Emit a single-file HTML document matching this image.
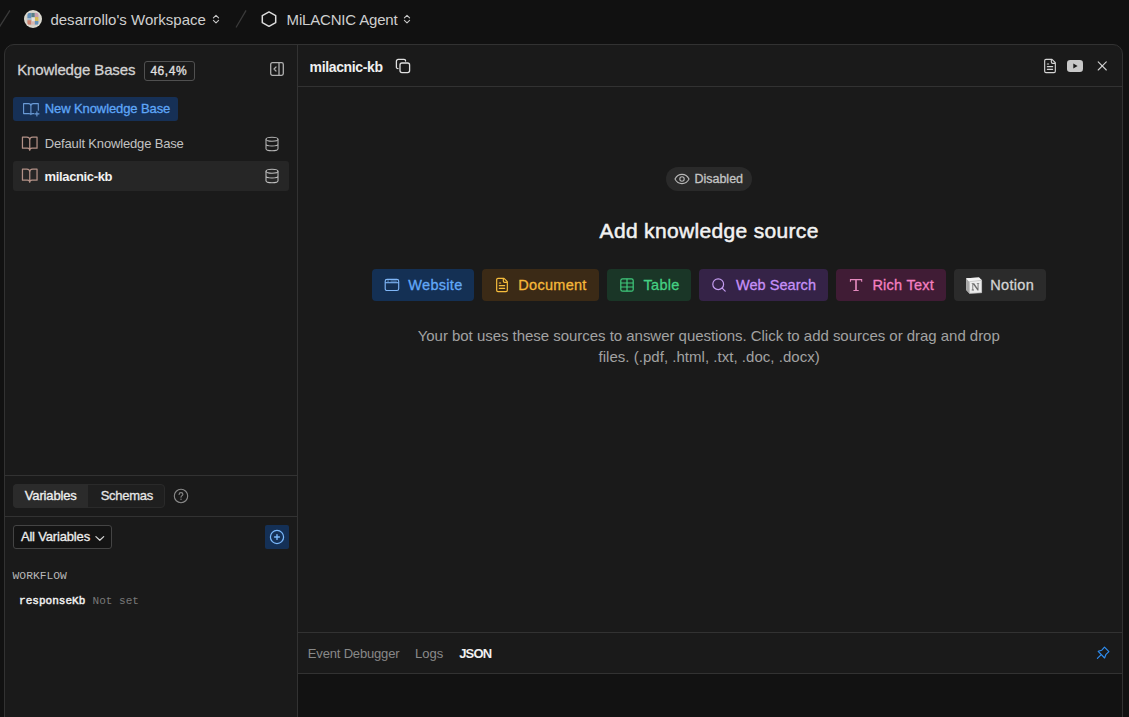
<!DOCTYPE html>
<html>
<head>
<meta charset="utf-8">
<style>
*{box-sizing:border-box;margin:0;padding:0}
html,body{width:1129px;height:717px;overflow:hidden;background:#111111;font-family:"Liberation Sans",sans-serif;color:#e6e6e6}
.abs{position:absolute}
.t{position:absolute;white-space:nowrap;line-height:1}
svg{position:absolute;overflow:visible}
#frame{position:absolute;left:4px;top:44px;width:1119px;height:700px;border:1px solid #323232;border-radius:10px;background:#1a1a1a;overflow:hidden}
.hl{position:absolute;height:1px;background:#323232}
.vl{position:absolute;width:1px;background:#323232}
.m{-webkit-text-stroke:0.3px currentColor}
.m2{-webkit-text-stroke:0.5px currentColor}
.btn{position:absolute;top:269px;height:32px;border-radius:4px}
</style>
</head>
<body>
<!-- top bar -->
<div id="topbar">
  <svg style="left:0px;top:0px" width="20" height="40" viewBox="0 0 20 40"><path d="M9.6 10.8 L-0.6 27" stroke="#3a3a3a" stroke-width="1.3" fill="none" stroke-linecap="round"/></svg>
  <svg id="avatar" style="left:24px;top:10px" width="18" height="18" viewBox="0 0 18 18"><defs><clipPath id="avc"><circle cx="9" cy="9" r="7.4"/></clipPath></defs><circle cx="9" cy="9" r="9" fill="#dcdad0"/><g clip-path="url(#avc)" opacity="0.85"><rect x="0" y="0" width="18" height="18" fill="#cfcdc6"/><rect x="3.4" y="3" width="4" height="5" fill="#4d82b4"/><rect x="7.4" y="3" width="3.4" height="4.4" fill="#3f6f78"/><rect x="10.8" y="3" width="3.6" height="4" fill="#c592aa"/><rect x="10.8" y="7" width="3.6" height="4" fill="#d6b643"/><rect x="7.4" y="7.4" width="3.4" height="4" fill="#e6e6e6"/><rect x="3.4" y="8" width="4" height="2.2" fill="#9fb4c8"/><rect x="3.4" y="10.2" width="4" height="4.4" fill="#c7705c"/><rect x="7.4" y="11.4" width="3.4" height="3.2" fill="#d9b0a8"/><rect x="10.8" y="11" width="3.6" height="3.6" fill="#4f86b8"/></g></svg>
  <div class="t" style="left:50.4px;top:12px;font-size:15px;color:#cfcfcf;letter-spacing:0.02px">desarrollo's Workspace</div>
  <svg style="left:211px;top:13px" width="10" height="12" viewBox="0 0 10 12"><path d="M2.4 4.9 L5 2.3 L7.6 4.9 M2.4 7.3 L5 9.9 L7.6 7.3" stroke="#c8c8c8" stroke-width="1.1" fill="none" stroke-linecap="round" stroke-linejoin="round"/></svg>
  <svg style="left:230px;top:0px" width="20" height="40" viewBox="0 0 20 40"><path d="M15.8 10.8 L6.3 27" stroke="#3a3a3a" stroke-width="1.3" fill="none" stroke-linecap="round"/></svg>
  <svg style="left:261px;top:11px" width="16" height="17" viewBox="0 0 16 17"><path d="M8 0.9 L14.7 4.6 L14.7 11.6 L8 15.3 L1.3 11.6 L1.3 4.6 Z" stroke="#dcdcdc" stroke-width="1.5" fill="none" stroke-linejoin="round"/></svg>
  <div class="t" style="left:286.6px;top:12px;font-size:15px;color:#cfcfcf;letter-spacing:-0.18px">MiLACNIC Agent</div>
  <svg style="left:402px;top:13px" width="10" height="12" viewBox="0 0 10 12"><path d="M2.4 4.9 L5 2.3 L7.6 4.9 M2.4 7.3 L5 9.9 L7.6 7.3" stroke="#c8c8c8" stroke-width="1.1" fill="none" stroke-linecap="round" stroke-linejoin="round"/></svg>
</div>

<div id="frame"></div>

<!-- structural lines -->
<div class="vl" style="left:297px;top:45px;height:672px"></div>
<div class="hl" style="left:298px;top:86px;width:824px"></div>
<div class="hl" style="left:5px;top:475px;width:292px"></div>
<div class="hl" style="left:5px;top:516px;width:292px"></div>
<div class="hl" style="left:298px;top:632px;width:824px"></div>
<div class="hl" style="left:298px;top:673px;width:824px"></div>
<div class="abs" style="left:298px;top:674px;width:824px;height:43px;background:#121212"></div>

<!-- sidebar header -->
<div class="t m" style="left:17.2px;top:61.7px;font-size:15px;color:#d2d2d2;letter-spacing:-0.13px">Knowledge Bases</div>
<div class="abs" style="left:144px;top:61px;width:51px;height:20px;border:1px solid #505050;border-radius:3px"></div>
<div class="t m" style="left:150.4px;top:65px;font-size:12px;color:#e0e0e0;letter-spacing:0.55px">46,4%</div>
<svg style="left:270px;top:62px" width="14" height="14" viewBox="0 0 14 14"><rect x="0.7" y="0.7" width="12.6" height="12.6" rx="1.7" stroke="#b0b0b0" stroke-width="1.3" fill="none"/><path d="M9 0.7 V13.3" stroke="#b0b0b0" stroke-width="1.3"/><path d="M6 5 L4 7 L6 9" stroke="#b0b0b0" stroke-width="1.2" fill="none" stroke-linecap="round" stroke-linejoin="round"/></svg>

<!-- new kb button -->
<div class="abs" style="left:13px;top:97px;width:165px;height:24px;border-radius:3px;background:#163056"></div>
<svg style="left:22px;top:101px" width="18" height="16" viewBox="0 0 18 16"><path d="M1.6 2.6 H6.6 Q8.9 2.6 8.9 5 V13.6 Q8.9 12.6 7 12.6 H1.6 Z M8.9 5 Q8.9 2.6 11.2 2.6 H16.3 V9.2 M8.9 13.6 Q8.9 12.6 10.8 12.6 H11.6" stroke="#6a9ad6" stroke-width="1.1" fill="none" stroke-linejoin="round" stroke-linecap="round"/><path d="M14.9 10.7 V15 M12.8 12.85 H17" stroke="#6a9ad6" stroke-width="1.1" stroke-linecap="round"/></svg>
<div class="t m" style="left:44.8px;top:102px;font-size:13px;color:#5ea6f7;letter-spacing:-0.1px">New Knowledge Base</div>

<!-- kb rows -->
<svg style="left:21px;top:135px" width="17.5" height="17.5" viewBox="0 0 24 24"><path d="M2 3h6a4 4 0 0 1 4 4v14a3 3 0 0 0-3-3H2z M22 3h-6a4 4 0 0 0-4 4v14a3 3 0 0 1 3-3h7z" stroke="#b39187" stroke-width="1.7" fill="none" stroke-linejoin="round" stroke-linecap="round"/></svg>
<div class="t" style="left:44.8px;top:137px;font-size:13px;color:#c2c2c2;letter-spacing:-0.16px">Default Knowledge Base</div>
<svg class="db" style="left:264.3px;top:136.2px" width="16" height="16" viewBox="0 0 24 24" stroke="#b4b4b4" stroke-width="1.6"><ellipse cx="12" cy="5" rx="9" ry="3" fill="none"/><path d="M3 5V19A9 3 0 0 0 21 19V5 M3 12A9 3 0 0 0 21 12" fill="none"/></svg>

<div class="abs" style="left:13px;top:161px;width:276px;height:30px;border-radius:3px;background:#262626"></div>
<svg style="left:21px;top:167.3px" width="17.5" height="17.5" viewBox="0 0 24 24"><path d="M2 3h6a4 4 0 0 1 4 4v14a3 3 0 0 0-3-3H2z M22 3h-6a4 4 0 0 0-4 4v14a3 3 0 0 1 3-3h7z" stroke="#b39187" stroke-width="1.7" fill="none" stroke-linejoin="round" stroke-linecap="round"/></svg>
<div class="t" style="left:44.6px;top:169.5px;font-size:13px;color:#f2f2f2;font-weight:bold;letter-spacing:-0.36px">milacnic-kb</div>
<svg class="db" style="left:264.3px;top:168.1px" width="16" height="16" viewBox="0 0 24 24" stroke="#c0c0c0" stroke-width="1.6"><ellipse cx="12" cy="5" rx="9" ry="3" fill="none"/><path d="M3 5V19A9 3 0 0 0 21 19V5 M3 12A9 3 0 0 0 21 12" fill="none"/></svg>

<!-- variables section -->
<div class="abs" style="left:13px;top:484px;width:152px;height:24px;border-radius:4px;background:#1f1f1f;border:1px solid #2a2a2a"></div>
<div class="abs" style="left:13px;top:484px;width:75px;height:24px;border-radius:4px 0 0 4px;background:#2b2b2b"></div>
<div class="t m" style="left:24.8px;top:489px;font-size:13px;color:#f0f0f0;letter-spacing:-0.15px">Variables</div>
<div class="t m" style="left:100.7px;top:489px;font-size:13px;color:#e6e6e6;letter-spacing:-0.27px">Schemas</div>
<svg style="left:173px;top:488px" width="16" height="16" viewBox="0 0 16 16"><circle cx="8" cy="8" r="6.7" stroke="#8a8a8a" stroke-width="1.1" fill="none"/><path d="M6.1 6.4 C6.1 5.2 7 4.6 8 4.6 C9.1 4.6 9.9 5.3 9.9 6.3 C9.9 7.6 8 7.7 8 9.2" stroke="#8a8a8a" stroke-width="1.1" fill="none" stroke-linecap="round"/><circle cx="8" cy="11.2" r="0.7" fill="#8a8a8a"/></svg>

<div class="abs" style="left:13px;top:525px;width:99px;height:24px;border-radius:3px;background:#141414;border:1px solid #444"></div>
<div class="t m" style="left:20.9px;top:530px;font-size:13px;color:#ededed;letter-spacing:-0.17px">All Variables</div>
<svg style="left:94px;top:534px" width="12" height="8" viewBox="0 0 12 8"><path d="M1.9 2.6 L5.8 6.3 L9.7 2.6" stroke="#d8d8d8" stroke-width="1.2" fill="none" stroke-linecap="round" stroke-linejoin="round"/></svg>
<div class="abs" style="left:265px;top:525px;width:24px;height:24px;border-radius:2px;background:#143056"></div>
<svg style="left:269px;top:529px" width="16" height="16" viewBox="0 0 16 16"><circle cx="8" cy="8" r="6.6" stroke="#7ab8fb" stroke-width="1.25" fill="none"/><path d="M8 5.6 V10.4 M5.6 8 H10.4" stroke="#7ab8fb" stroke-width="1.4" stroke-linecap="round"/></svg>

<div class="t" style="left:12.6px;top:571.4px;font-size:11.3px;color:#b8b8b8;font-family:'Liberation Mono',monospace;">WORKFLOW</div>
<div class="t" style="left:19px;top:595.8px;font-size:11.05px;color:#f0f0f0;font-family:'Liberation Mono',monospace;-webkit-text-stroke:0.45px currentColor">responseKb</div>
<div class="t" style="left:92.5px;top:595.8px;font-size:11.05px;color:#787878;font-family:'Liberation Mono',monospace;">Not set</div>

<!-- main header -->
<div class="t" style="left:309.6px;top:60px;font-size:14px;color:#f0f0f0;font-weight:bold;letter-spacing:-0.36px">milacnic-kb</div>
<svg style="left:395px;top:58px" width="16" height="16" viewBox="0 0 16 16"><rect x="5" y="5" width="9.6" height="9.6" rx="2" stroke="#e0e0e0" stroke-width="1.3" fill="none"/><path d="M3 10.6 C1.9 10.6 1.4 10 1.4 9 V3.2 C1.4 2.2 2.2 1.4 3.2 1.4 H9 C10 1.4 10.6 1.9 10.6 3" stroke="#e0e0e0" stroke-width="1.3" fill="none" stroke-linecap="round"/></svg>

<svg style="left:1042.2px;top:57.6px" width="16" height="16" viewBox="0 0 24 24" stroke="#d4d4d4" stroke-width="1.7"><path d="M15 2H6a2 2 0 0 0-2 2v16a2 2 0 0 0 2 2h12a2 2 0 0 0 2-2V7Z M14 2v4a2 2 0 0 0 2 2h4 M10 9H8 M16 13H8 M16 17H8" fill="none" stroke-linecap="round" stroke-linejoin="round"/></svg>
<svg style="left:1067px;top:60px" width="16" height="12" viewBox="0 0 16 12"><rect x="0" y="0" width="16" height="12" rx="3.2" fill="#c8c8c8"/><path d="M6.3 3.4 L10.6 6 L6.3 8.6 Z" fill="#1a1a1a"/></svg>
<svg style="left:1097px;top:61px" width="10" height="10" viewBox="0 0 10 10"><path d="M1.2 0.9 L9.3 9 M9.3 0.9 L1.2 9" stroke="#d0d0d0" stroke-width="1.1" stroke-linecap="round"/></svg>

<!-- disabled pill -->
<div class="abs" style="left:666px;top:167px;width:86px;height:24px;border-radius:12px;background:#2a2a2a"></div>
<svg style="left:674px;top:173px" width="16" height="12" viewBox="0 0 16 12"><path d="M1 6 C2.6 2.8 5 1.4 8 1.4 C11 1.4 13.4 2.8 15 6 C13.4 9.2 11 10.6 8 10.6 C5 10.6 2.6 9.2 1 6 Z" stroke="#b8b8b8" stroke-width="1.1" fill="none"/><circle cx="8" cy="6" r="2.2" stroke="#b8b8b8" stroke-width="1.1" fill="none"/></svg>
<div class="t m" style="left:694.4px;top:173px;font-size:12.5px;color:#c4c4c4;">Disabled</div>

<!-- title -->
<div class="t m2" style="left:599.6px;top:219.5px;font-size:21px;color:#f2f2f2;letter-spacing:0.33px">Add knowledge source</div>

<!-- buttons -->
<div class="btn" style="left:372px;width:102px;background:#143054"></div>
<svg style="left:384px;top:278px" width="16" height="14" viewBox="0 0 16 14"><rect x="1.2" y="1.4" width="13.5" height="11.1" rx="1.8" stroke="#7fb6f7" stroke-width="1.15" fill="none"/><path d="M1.2 4.7 H14.7" stroke="#7fb6f7" stroke-width="1.1"/><path d="M3.2 3.05 H5.1 M6.5 3.05 H12.8" stroke="#7fb6f7" stroke-width="0.9" opacity="0.8"/></svg>
<div class="t m" style="left:408.3px;top:278px;font-size:14.5px;letter-spacing:0.3px;color:#62a8f8;">Website</div>

<div class="btn" style="left:482px;width:117px;background:#3b2a16"></div>
<svg style="left:494.1px;top:276.9px" width="16" height="16" viewBox="0 0 24 24" stroke="#f6bd3c" stroke-width="1.8"><path d="M15 2H6a2 2 0 0 0-2 2v16a2 2 0 0 0 2 2h12a2 2 0 0 0 2-2V7Z M14 2v4a2 2 0 0 0 2 2h4 M10 9H8 M16 13H8 M16 17H8" fill="none" stroke-linecap="round" stroke-linejoin="round"/></svg>
<div class="t m" style="left:518.3px;top:278px;font-size:14.5px;letter-spacing:0.28px;color:#f5b83a;">Document</div>

<div class="btn" style="left:607px;width:84px;background:#1a3627"></div>
<svg style="left:620px;top:278px" width="14" height="14" viewBox="0 0 14 14"><rect x="0.8" y="0.8" width="12.4" height="12.4" rx="1.8" stroke="#3fca7c" stroke-width="1.2" fill="none"/><path d="M0.8 5 H13.2 M0.8 9 H13.2 M7 0.8 V13.2" stroke="#3fca7c" stroke-width="1.2"/></svg>
<div class="t m" style="left:643.6px;top:278px;font-size:14.5px;letter-spacing:0.25px;color:#45d083;">Table</div>

<div class="btn" style="left:699px;width:129px;background:#352347"></div>
<svg style="left:711px;top:277px" width="16" height="16" viewBox="0 0 16 16"><circle cx="7.2" cy="7.2" r="5.4" stroke="#c49cf0" stroke-width="1.2" fill="none"/><path d="M11.2 11.2 L14.2 14.2" stroke="#c49cf0" stroke-width="1.2" stroke-linecap="round"/></svg>
<div class="t m" style="left:736px;top:278px;font-size:14.5px;letter-spacing:0.05px;color:#c690f7;">Web Search</div>

<div class="btn" style="left:836px;width:110px;background:#401c35"></div>
<svg style="left:849px;top:278px" width="14" height="14" viewBox="0 0 14 14"><path d="M0.9 1 H13.2 V4.1 H12.5 L12 2.2 H8 V12.1 H9.7 V13 H4.4 V12.1 H6.1 V2.2 H2.1 L1.6 4.1 H0.9 Z" fill="#e58abf"/><rect x="6.1" y="2.2" width="1.9" height="9.9" fill="#c676a5"/></svg>
<div class="t m" style="left:872.4px;top:278px;font-size:14.5px;letter-spacing:0.25px;color:#f47fc0;">Rich Text</div>

<div class="btn" style="left:954px;width:92px;background:#2b2b2b"></div>
<svg style="left:966px;top:276.5px" width="16" height="17" viewBox="0 0 16 17"><path d="M0.2 1.3 L13 0.4 L15.8 3.3 L15.8 15.8 L3.5 16.6 L0.2 12.9 Z" fill="#ececec"/><path d="M0.2 1.3 L3.3 4.7 L3.5 16.6 L0.2 12.9 Z" fill="#a6a6a6"/><path d="M0.2 1.3 L13 0.4 L15.8 3.3 L3.3 4.7 Z" fill="#f4f4f4"/><path d="M3.3 4.7 L15.8 3.3 M3.4 4.7 L3.5 16.4 L15.6 15.7 L15.6 3.5" stroke="#bdbdbd" stroke-width="0.7" fill="none"/><path d="M5.7 6.3 H8.2 L11.6 11.3 V7.1 H10.8 V6.3 H13.2 V7.1 H12.5 V13.4 H11.5 L7.2 7.6 V12.6 H8 V13.4 H5.7 V12.6 H6.4 V7.1 H5.7 Z" fill="#6c6c6c"/></svg>
<div class="t m" style="left:990.3px;top:278px;font-size:14.5px;letter-spacing:0.3px;color:#d4d4d4;">Notion</div>

<!-- description -->
<div class="t" style="left:417.7px;top:328px;font-size:15px;color:#a2a2a2;letter-spacing:-0.032px">Your bot uses these sources to answer questions. Click to add sources or drag and drop</div>
<div class="t" style="left:598.5px;top:349px;font-size:15px;color:#a2a2a2;letter-spacing:0.03px">files. (.pdf, .html, .txt, .doc, .docx)</div>

<!-- bottom tabs -->
<div class="t" style="left:307.8px;top:647px;font-size:13px;color:#888888;letter-spacing:-0.17px">Event Debugger</div>
<div class="t" style="left:415px;top:647px;font-size:13px;color:#8a8a8a;">Logs</div>
<div class="t" style="left:459.2px;top:647px;font-size:13px;color:#f0f0f0;font-weight:bold;letter-spacing:-0.8px">JSON</div>
<svg style="left:1096px;top:646.4px" width="14" height="14" viewBox="0 0 14 14"><path d="M8.5 1.1 L12.9 5.6 L10 8.3 L8.6 12 L2.2 5.3 L5.8 4.2 Z M5.2 8.6 L1.4 12.4" stroke="#2f8df0" stroke-width="1.15" fill="none" stroke-linejoin="round" stroke-linecap="round"/></svg>
</body>
</html>
